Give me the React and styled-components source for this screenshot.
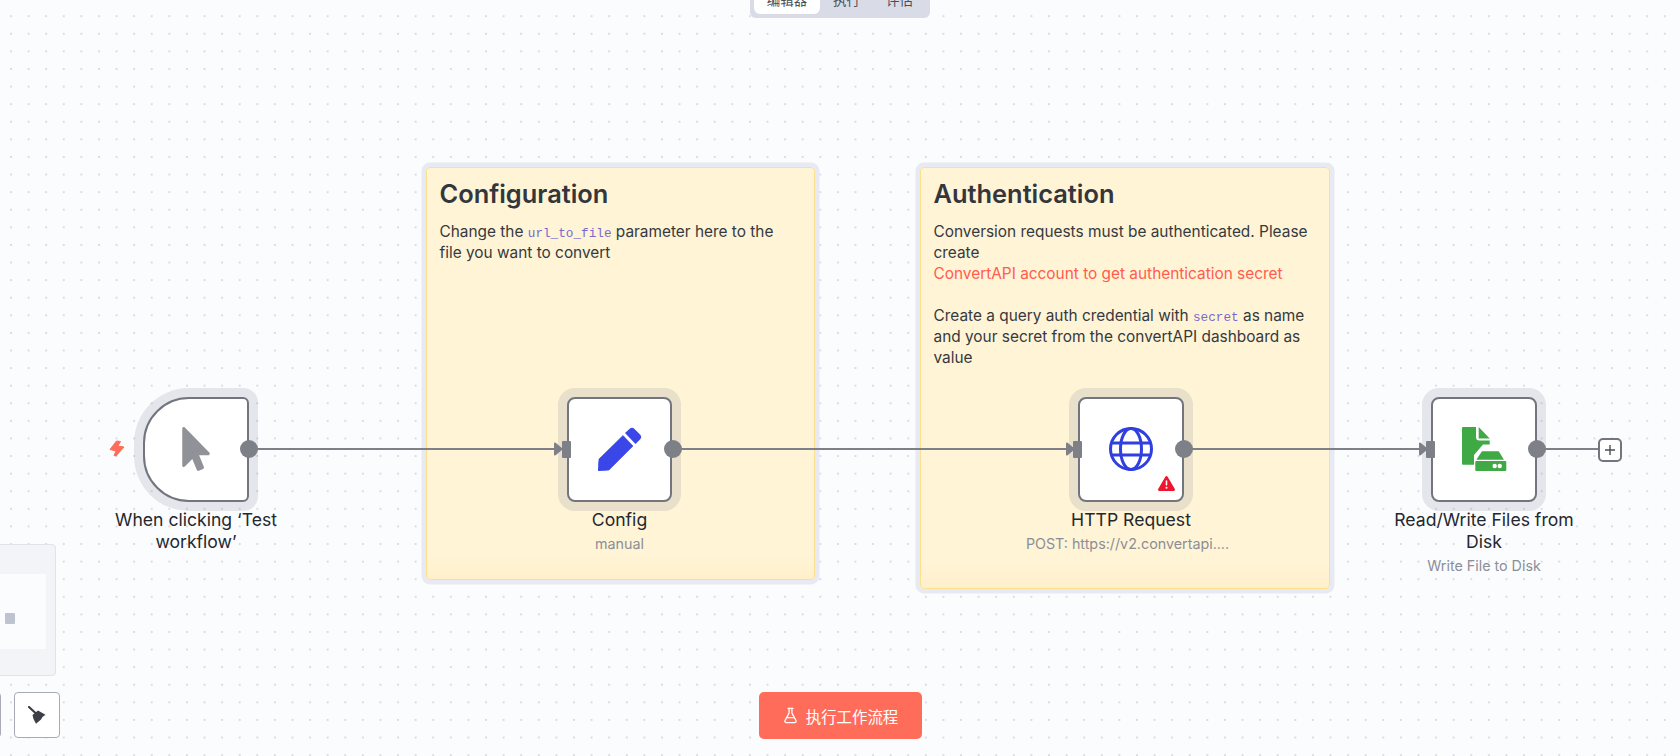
import React from 'react';
import styled, { createGlobalStyle } from 'styled-components';
import { FaMousePointer } from 'react-icons/fa';
import { FaTriangleExclamation } from 'react-icons/fa6';
import { FlaskConical } from 'lucide-react';

const GlobalStyle = createGlobalStyle`
  html, body { margin: 0; padding: 0; height: 100%; overflow: hidden; }
  body { font-family: Inter, "Noto Sans CJK SC", sans-serif; background: #fbfcfe; }
`;

const Canvas = styled.div`
  position: relative;
  width: 1680px;
  height: 756px;
  overflow: hidden;
  background-color: #fbfcfe;
  background-image: radial-gradient(circle, #cdd0d7 0.6px, transparent 0.9px);
  background-size: 17.6px 17.6px;
  background-position: 2.2px 7.4px;
`;

const Tabs = styled.div`
  position: absolute;
  left: 750px;
  top: -20px;
  width: 180px;
  height: 38px;
  box-sizing: border-box;
  padding: 4px;
  display: flex;
  background: #d9dce6;
  border-radius: 6px;
`;

const Tab = styled.div`
  flex: ${p => (p.$active ? '0 0 66px' : '1')};
  display: flex;
  align-items: center;
  justify-content: center;
  background: ${p => (p.$active ? '#ffffff' : 'transparent')};
  border-radius: 6px;
  font-size: 13.5px;
  color: #4c4f58;
`;

const Note = styled.div`
  position: absolute;
  left: ${p => p.$x}px;
  top: 167px;
  width: ${p => p.$w}px;
  height: ${p => p.$h}px;
  box-sizing: border-box;
  padding: 10px 18px 10px 12.5px;
  background: linear-gradient(#fff4d6 94%, #fff0cb);
  border: 1px solid #fbe08f;
  border-radius: 4px;
  box-shadow: 0 0 0 4.5px #e7eaf2;
  color: #363940;
  font-size: 15.4px;
  line-height: 21px;
`;

const NoteTitle = styled.h2`
  margin: 0 0 11px;
  font-size: 25.4px;
  line-height: 32px;
  font-weight: 600;
  color: #33363d;
`;

const Code = styled.code`
  font-family: "Liberation Mono", monospace;
  font-size: 12.7px;
  line-height: 0;
  color: #7a68cf;
`;

const NoteLink = styled.span`
  color: #ff5c4d;
`;

const Wires = styled.svg`
  position: absolute;
  left: 0;
  top: 0;
`;

const Node = styled.div`
  position: absolute;
  left: ${p => p.$cx - 100}px;
  top: 396.5px;
  width: 200px;
  display: flex;
  flex-direction: column;
  align-items: center;
`;

const NodeBox = styled.div`
  position: relative;
  width: 105.6px;
  height: 105.6px;
  box-sizing: border-box;
  display: flex;
  align-items: center;
  justify-content: center;
  background: #fff;
  border: 2px solid #73757e;
  border-radius: ${p => (p.$trigger ? '46px 6px 6px 46px' : '8px')};
  box-shadow: 0 0 0 9px rgba(120, 122, 140, 0.17);
`;

const OutPort = styled.span`
  position: absolute;
  right: -11.5px;
  top: 41.5px;
  width: 18px;
  height: 18px;
  border-radius: 50%;
  background: #7e8087;
`;

const InPort = styled.span`
  position: absolute;
  left: -7px;
  top: 42px;
  width: 9px;
  height: 17px;
  border-radius: 1px;
  background: #7e8087;
`;

const Warn = styled.span`
  position: absolute;
  right: 7px;
  bottom: 8.5px;
  display: flex;
  color: #f0152e;
  font-size: 17px;
`;

const NodeName = styled.div`
  margin-top: 7px;
  width: 190px;
  text-align: center;
  font-size: 17.6px;
  line-height: 22px;
  color: #24272e;
`;

const NodeSub = styled.div`
  margin-top: 3px;
  margin-right: ${p => p.$pull || 0}px;
  text-align: center;
  white-space: nowrap;
  font-size: 14.3px;
  line-height: 20px;
  color: #8b8e97;
`;

const Bolt = styled.svg`
  position: absolute;
  left: 109px;
  top: 440px;
`;

const PlusButton = styled.div`
  position: absolute;
  left: 1597.5px;
  top: 437.5px;
  width: 24px;
  height: 24px;
  box-sizing: border-box;
  display: flex;
  align-items: center;
  justify-content: center;
  background: #fff;
  border: 2px solid #73757e;
  border-radius: 5px;
  color: #4c4f58;
`;

const Minimap = styled.div`
  position: absolute;
  left: -200px;
  top: 544px;
  width: 256px;
  height: 132px;
  box-sizing: border-box;
  padding: 29px 9px 26px 0;
  background: #f3f4f7;
  border: 1px solid #e1e3eb;
  border-radius: 4px;
  display: flex;
`;

const MinimapView = styled.div`
  flex: 1;
  position: relative;
  background: #fbfcfe;
`;

const MinimapNode = styled.span`
  position: absolute;
  left: 204px;
  top: 39px;
  width: 10px;
  height: 11px;
  border-radius: 1px;
  background: #bdc3d0;
`;

const Toolbar = styled.div`
  position: absolute;
  left: -45px;
  top: 692px;
  display: flex;
  gap: 13px;
`;

const ToolButton = styled.div`
  width: 46px;
  height: 46px;
  box-sizing: border-box;
  display: flex;
  align-items: center;
  justify-content: center;
  background: #fff;
  border: 1px solid #a8abb5;
  border-radius: 4px;
`;

const RunButton = styled.div`
  position: absolute;
  left: 758.5px;
  top: 692px;
  width: 163px;
  height: 47px;
  box-sizing: border-box;
  display: flex;
  align-items: center;
  justify-content: center;
  gap: 7px;
  background: #ff6d5a;
  border-radius: 5px;
  color: #fff;
  font-size: 15.4px;
`;

const Pen = () => (
  <svg width="44" height="44" viewBox="0 0 44 44" fill="#3a46e8">
    <path d="M25 8.500L35 19 11 43l-10 1a1 1 0 0 1-1-1l1-11z" stroke="#3a46e8" strokeWidth="0.6" strokeLinejoin="round" />
    <path d="M27 6l5-4.500q2-1.500 4 0L42.500 8q1.500 2 0 4l-5 5z" />
  </svg>
);

const Globe = () => (
  <svg width="48" height="48" viewBox="0 0 48 48" fill="none" stroke="#2f3fe0" strokeWidth="3">
    <circle cx="24" cy="24" r="20.5" />
    <ellipse cx="24" cy="24" rx="10.5" ry="20.5" />
    <path d="M4.500 18h39M4.500 30h39" />
  </svg>
);

const DiskFile = () => (
  <svg width="45" height="44" viewBox="0 0 45 44" fill="#3fa945">
    <path d="M0 1a1 1 0 0 1 1-1h13v10q0 3.500 3.500 3.500h10.200v4H21L12 28v9.700H1a1 1 0 0 1-1-1z" />
    <path d="M16.700 0l11 11.500h-11z" />
    <path d="M20 24.300h16.700l5.300 8.400H14.300z" />
    <path fillRule="evenodd" d="M14.300 34h29a1 1 0 0 1 1 1v8a1 1 0 0 1-1 1h-29a1 1 0 0 1-1-1v-8a1 1 0 0 1 1-1zm18.400 2.800a2.200 2.200 0 1 0 0 4.400 2.200 2.200 0 0 0 0-4.400zm5 0a2.200 2.200 0 1 0 0 4.400 2.200 2.200 0 0 0 0-4.400z" />
  </svg>
);

const Broom = () => (
  <svg width="18" height="18" viewBox="0 0 18 18" fill="#3d3f46">
    <path d="M1 1l7 6.500" stroke="#3d3f46" strokeWidth="2.200" strokeLinecap="round" />
    <path d="M4.500 9L10 4.500 17.500 8.700 14.500 11 13 13.500 8 17.700 5.500 13z" strokeLinejoin="round" />
  </svg>
);

const Arrow = ({ x }) => (
  <path d={`M${x + 1} 443.500l6.500 5.500-6.500 5.500z`} fill="#7e8087" stroke="#7e8087" strokeWidth="2" strokeLinejoin="round" />
);

export default function App() {
  return (
    <Canvas>
      <GlobalStyle />
      <Note $x={426} $w={389} $h={413}>
        <NoteTitle>Configuration</NoteTitle>
        Change the <Code>url_to_file</Code> parameter here to the file you want to convert
      </Note>
      <Note $x={920} $w={410} $h={422}>
        <NoteTitle>Authentication</NoteTitle>
        Conversion requests must be authenticated. Please create
        <br />
        <NoteLink>ConvertAPI account to get authentication secret</NoteLink>
        <br />
        <br />
        Create a query auth credential with <Code>secret</Code> as name and your secret from the convertAPI dashboard as value
      </Note>

      <Wires width="1680" height="756">
        <path d="M249 449H556M672 449H1068M1184 449H1421M1536 449H1598" stroke="#7e8087" strokeWidth="2" fill="none" />
        <Arrow x={554} />
        <Arrow x={1066} />
        <Arrow x={1419} />
      </Wires>

      <Bolt width="16" height="17" viewBox="0 0 16 17" fill="#ff6d5a" stroke="#ff6d5a" strokeWidth="1" strokeLinejoin="round">
        <path d="M7.500 1L11.500 1.500 9 6 15 7 7 16 5 15.500 7 11 1 9.500z" />
      </Bolt>
      <Node $cx={196}>
        <NodeBox $trigger>
          <FaMousePointer size={44} color="#909298" />
          <OutPort />
        </NodeBox>
        <NodeName>When clicking ‘Test workflow’</NodeName>
      </Node>
      <Node $cx={619.5}>
        <NodeBox>
          <InPort />
          <Pen />
          <OutPort />
        </NodeBox>
        <NodeName>Config</NodeName>
        <NodeSub>manual</NodeSub>
      </Node>
      <Node $cx={1131}>
        <NodeBox>
          <InPort />
          <Globe />
          <OutPort />
          <Warn><FaTriangleExclamation /></Warn>
        </NodeBox>
        <NodeName>HTTP Request</NodeName>
        <NodeSub $pull={7}>POST: https://v2.convertapi....</NodeSub>
      </Node>
      <Node $cx={1484}>
        <NodeBox>
          <InPort />
          <DiskFile />
          <OutPort />
        </NodeBox>
        <NodeName>Read/Write Files from Disk</NodeName>
        <NodeSub>Write File to Disk</NodeSub>
      </Node>
      <PlusButton>
        <svg width="12" height="12" viewBox="0 0 12 12" stroke="#4c4f58" strokeWidth="1.4"><path d="M6 1v10M1 6h10" /></svg>
      </PlusButton>

      <Tabs>
        <Tab $active>编辑器</Tab>
        <Tab>执行</Tab>
        <Tab>评估</Tab>
      </Tabs>

      <Minimap>
        <MinimapView><MinimapNode /></MinimapView>
      </Minimap>
      <Toolbar>
        <ToolButton />
        <ToolButton><Broom /></ToolButton>
      </Toolbar>
      <RunButton>
        <FlaskConical size={17} strokeWidth={1.8} />
        执行工作流程
      </RunButton>
    </Canvas>
  );
}
